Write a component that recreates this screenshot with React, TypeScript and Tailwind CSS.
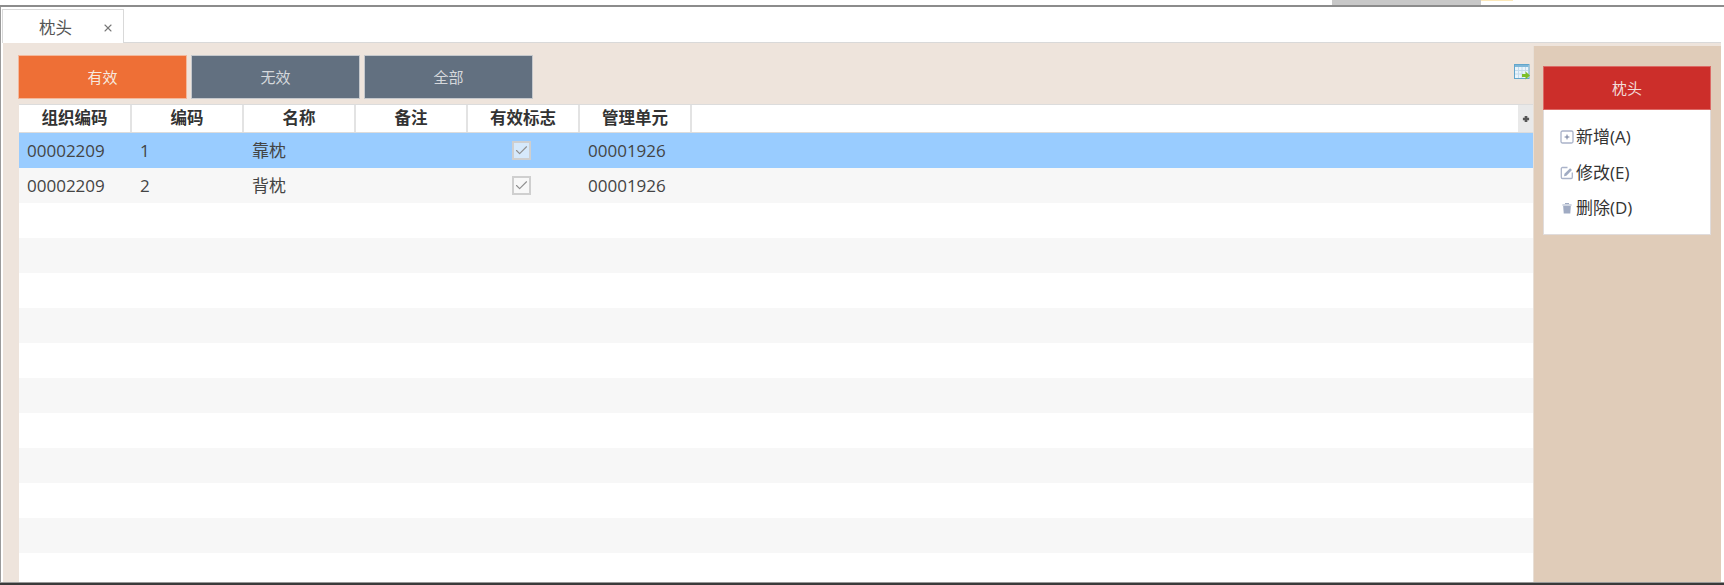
import React from "react";
import { Check, X } from "lucide-react";

const columns = ["组织编码", "编码", "名称", "备注", "有效标志", "管理单元"];

const rows = [
  { org: "00002209", code: "1", name: "靠枕", unit: "00001926" },
  { org: "00002209", code: "2", name: "背枕", unit: "00001926" },
];

const FONT = "font-['Open_Sans','Noto_Sans_CJK_SC',sans-serif]";

const AddIcon = () => (
  <svg width="14" height="14" viewBox="0 0 14 14" fill="none" className="shrink-0">
    <rect x="1" y="1" width="12" height="12" rx="1.5" stroke="#aab3c9" strokeWidth="1.3" />
    <path d="M7 4.600v4.800M4.600 7h4.800" stroke="#6f7b99" strokeWidth="1" />
  </svg>
);

const EditIcon = () => (
  <svg width="14" height="14" viewBox="0 0 14 14" fill="none" className="shrink-0">
    <path d="M7.500 1.500H2.500a1.200 1.200 0 0 0-1.200 1.200v8.600a1.200 1.200 0 0 0 1.200 1.200h8.600a1.200 1.200 0 0 0 1.200-1.200V6.500" stroke="#aab3c9" strokeWidth="1.300" />
    <path d="M4 10.200l.5-2.400 5.600-5.600 1.900 1.900-5.600 5.600z" fill="#a0abc3" />
  </svg>
);

const TrashIcon = () => (
  <svg width="14" height="14" viewBox="0 0 14 14" fill="none" className="shrink-0">
    <path d="M5 2.500h4M2.400 4h9.200" stroke="#a0abc3" strokeWidth="1.200" />
    <path d="M3.200 5h7.600l-.5 7.500H3.700z" fill="#a0abc3" />
  </svg>
);

const ExportIcon = () => (
  <svg width="16" height="16" viewBox="0 0 16 16" className="shrink-0">
    <rect x="0.5" y="0.5" width="14.500" height="14" fill="#eaf4fb" stroke="#62a6cc" />
    <rect x="1" y="1" width="13.500" height="2" fill="#7fb7d8" />
    <path d="M4.500 3v11M8 3v11M11.500 3v6M1 6.500h13M1 10h8" stroke="#c4dbec" strokeWidth="1" />
    <path d="M8 10h3.500V7.500L16 11.500l-4.500 4V13H8z" fill="#7dbf2a" />
  </svg>
);

const SortIcon = () => (
  <svg width="8" height="8" viewBox="0 0 9 9">
    <path d="M3 1h3v2h2v3H6v2H3V6H1V3h2z" fill="#555" />
  </svg>
);

const Checkbox = ({ selected }: { selected: boolean }) => (
  <span
    className={`mr-[5px] flex size-[19px] items-center justify-center border-2 border-[#cfcfcf] ${
      selected ? "bg-[#d6e9fb]" : "bg-[#f8f8f8]"
    }`}
  >
    <Check className="size-[15px] text-[#8f8f8f]" strokeWidth={1.8} />
  </span>
);

const App = () => {
  return (
    <div className={`${FONT} flex h-[585px] w-[1724px] flex-col overflow-hidden bg-white text-[#333]`}>
      {/* strip of the window behind */}
      <div className="flex h-[5px] justify-end bg-white">
        <div className="mr-[211px] flex">
          <div className="h-full w-[149px] bg-[#c8c8c8]" />
          <div className="h-[1px] w-[32px] bg-[#fbe7b8]" />
        </div>
      </div>
      <div className="h-[2px] bg-[#8c8c8c]" />

      <div className="flex min-h-0 flex-1 flex-col border-l border-l-[#9a9a9a] pr-[3px] pl-[2px]">
        {/* tabs */}
        <div className="flex h-[36px] shrink-0 items-end border-b border-[#d9d9d9]">
          <div className="-mb-px -ml-px flex h-[34px] w-[122px] items-center border-x border-t border-[#d9d9d9] bg-white pt-[3px] pl-[36px] text-[16.5px] text-[#555]">
            枕头
            <X className="ml-[30px] size-[12px] text-[#777]" strokeWidth={2.2} />
          </div>
        </div>

        <div className="flex min-h-0 flex-1 bg-[#eee4dc]">
          {/* left */}
          <div className="flex min-w-0 flex-1 flex-col pt-[12px] pl-[16px]">
            <div className="-ml-px flex h-[49px] shrink-0 gap-[4px]">
              <button className="h-[44px] w-[169px] border border-[#f3b89c] bg-[#ee6f36] text-[15px] text-[#f7e9df]">有效</button>
              <button className="h-[44px] w-[169px] border border-[#c5c8cc] bg-[#627080] text-[15px] text-[#d5d8dc]">无效</button>
              <button className="h-[44px] w-[169px] border border-[#c5c8cc] bg-[#627080] text-[15px] text-[#d5d8dc]">全部</button>
              <div className="flex flex-1 justify-end pt-[9px] pr-[3px]">
                <ExportIcon />
              </div>
            </div>

            <div className="min-h-0 flex-1 overflow-hidden bg-white">
              {/* header */}
              <div className="flex h-[29px] border-y border-[#dcdcdc] bg-white">
                {columns.map((c) => (
                  <div
                    key={c}
                    className="flex w-[112px] items-center justify-center border-r-2 border-[#e3e3e3] text-[16.5px] font-bold text-[#333] first:w-[113px]"
                  >
                    {c}
                  </div>
                ))}
                <div className="flex-1" />
                <div className="flex w-[15px] items-center justify-center bg-[#e9e9e9]">
                  <SortIcon />
                </div>
              </div>

              {/* body */}
              {Array.from({ length: 13 }).map((_, i) => {
                const row = rows[i];
                const bg = i === 0 ? "bg-[#99ccff]" : i % 2 === 1 ? "bg-[#f7f7f7]" : "bg-white";
                return (
                  <div key={i} className={`flex h-[35px] items-center text-[17px] text-[#444] ${bg}`}>
                    {row && (
                      <>
                        <div className="w-[113px] pl-[8px]">{row.org}</div>
                        <div className="w-[112px] pl-[8px]">{row.code}</div>
                        <div className="w-[112px] pl-[8px]">{row.name}</div>
                        <div className="w-[112px]" />
                        <div className="flex w-[112px] justify-center">
                          <Checkbox selected={i === 0} />
                        </div>
                        <div className="w-[112px] pl-[8px]">{row.unit}</div>
                      </>
                    )}
                  </div>
                );
              })}
            </div>
          </div>

          {/* right */}
          <div className="mt-[3px] w-[188px] shrink-0 border-l border-[#e8dfd6] bg-[#e0ccb9] pt-[20px] pl-[9px]">
            <div className="w-[168px]">
              <div className="flex h-[44px] items-center justify-center border border-[#dc6a66] bg-[#cc2e2a] text-[15px] text-[#f3dcd9]">
                枕头
              </div>
              <div className="flex h-[125px] flex-col gap-[11.5px] border border-t-0 border-[#e0dcdc] bg-white pt-[15px] pl-[16px] text-[17px] leading-[24px] text-[#333]">
                <div className="flex items-center gap-[2px]"><AddIcon />新增(A)</div>
                <div className="flex items-center gap-[2px]"><EditIcon />修改(E)</div>
                <div className="flex items-center gap-[2px]"><TrashIcon />删除(D)</div>
              </div>
            </div>
          </div>
        </div>
      </div>

      <div className="h-[1px] shrink-0 bg-[#999]" />
      <div className="h-[2px] shrink-0 bg-[#3a3a3a]" />
    </div>
  );
};

export default App;
